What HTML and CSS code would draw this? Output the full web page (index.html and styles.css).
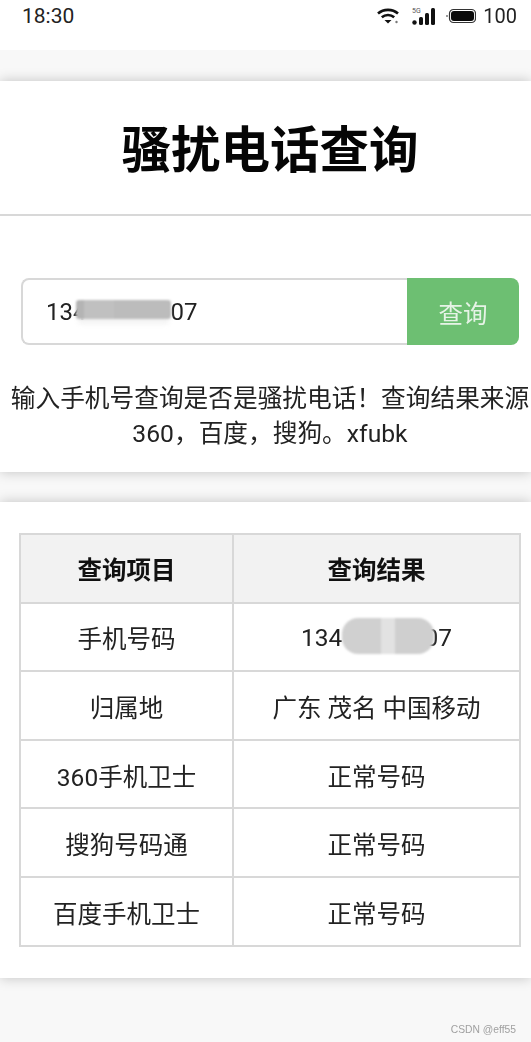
FILE: index.html
```html
<!DOCTYPE html>
<html lang="zh-CN">
<head>
<meta charset="utf-8">
<title>骚扰电话查询</title>
<link rel="stylesheet" href="styles.css">
</head>
<body>
<div class="page">
  <header class="status">
    <span class="time">18:30</span>
    <div class="status-right">
      <svg class="wifi" width="22" height="16" viewBox="0 0 22 16"><path d="M1 5.500C6.500.6 15.500.6 21 5.500" fill="none" stroke="#111" stroke-width="2.600"/><path d="M4.800 9.300C8.300 6.300 13.700 6.300 17.200 9.300" fill="none" stroke="#111" stroke-width="2.600"/><path d="M7.500 12L14.500 12L11 15.500Z" fill="#111"/><circle cx="19.500" cy="14" r="1.200" fill="#777"/></svg>
      <svg class="signal" width="23" height="20" viewBox="0 0 23 20"><text x="0" y="7" class="five-g">5G</text><circle cx="2.500" cy="16.500" r="2.200" fill="#111"/><rect x="7" y="11" width="4" height="8" rx="1.500" fill="#111"/><rect x="13" y="7" width="4" height="12" rx="1.500" fill="#111"/><rect x="19" y="2" width="4" height="17" rx="1.500" fill="#111"/></svg>
      <svg class="battery" width="30" height="16" viewBox="0 0 30 16"><circle cx="1" cy="8" r="1" fill="#777"/><rect x="3.500" y="1.500" width="26" height="13" rx="4" fill="none" stroke="#333" stroke-width="1.200"/><rect x="5" y="3" width="23" height="10" rx="3" fill="#0a0a0a"/></svg>
      <span class="level">100</span>
    </div>
  </header>

  <section class="card search-card">
    <h1 class="title">骚扰电话查询</h1>
    <div class="search-body">
      <div class="search-row">
        <div class="input">134<span class="gap-a"></span>07<span class="mask mask-input"></span></div>
        <div class="btn">查询</div>
      </div>
      <p class="hint">输入手机号查询是否是骚扰电话！查询结果来源360，百度，搜狗。xfubk</p>
    </div>
  </section>

  <section class="card table-card">
    <table class="result">
      <tr><th class="col-a">查询项目</th><th>查询结果</th></tr>
      <tr><td>手机号码</td><td class="phone">134<span class="gap-b"></span>07<span class="mask mask-cell"></span></td></tr>
      <tr><td>归属地</td><td>广东 茂名 中国移动</td></tr>
      <tr><td>360手机卫士</td><td>正常号码</td></tr>
      <tr><td>搜狗号码通</td><td>正常号码</td></tr>
      <tr><td>百度手机卫士</td><td>正常号码</td></tr>
    </table>
  </section>

  <footer class="mark">CSDN @eff55</footer>
</div>
</body>
</html>
```

FILE: styles.css
```css
* { box-sizing: border-box; }
html, body { margin: 0; padding: 0; }
body {
  width: 531px;
  height: 1042px;
  overflow: hidden;
  background: #f8f8f8;
  color: #1c1c1c;
  font-family: "Roboto", "Noto Sans CJK SC", sans-serif;
}
.page { position: relative; height: 1042px; filter: blur(0.35px); }

.status {
  height: 50px;
  background: #fff;
  display: flex;
  align-items: flex-start;
  justify-content: space-between;
  padding: 4px 14px 0 22px;
  font-size: 20px;
  line-height: 24px;
  color: #222;
}
.time { font-size: 21px; }
.status-right { display: flex; align-items: center; height: 24px; }
.wifi { margin-right: 13px; }
.signal { margin-right: 11px; }
.battery { margin-right: 7px; }
.five-g { font: 7px "Roboto", sans-serif; fill: #555; }

.card {
  background: #fff;
  box-shadow: 0 0 12px rgba(0, 0, 0, 0.22);
}
.search-card { margin-top: 31px; height: 391px; }
.table-card { margin-top: 30px; height: 476px; padding: 31px 10px 0 19px; }

.title {
  margin: 0;
  height: 135px;
  padding-left: 9px;
  border-bottom: 2px solid #d8d8d8;
  text-align: center;
  font-size: 49.500px;
  line-height: 141px;
  font-weight: 700;
  color: #050505;
}
.search-body { padding: 62px 12px 0 21px; }
.search-row { display: flex; height: 67px; }
.input {
  position: relative;
  width: 386px;
  border: 2px solid #d8d8d8;
  border-right: 0;
  border-radius: 8px 0 0 8px;
  padding-left: 23px;
  font-size: 24px;
  line-height: 64px;
  color: #222;
  display: flex;
}
.gap-a { width: 84px; }
.btn {
  width: 112px;
  background: #6dbf72;
  border-radius: 0 8px 8px 0;
  color: #e6f3e6;
  text-align: center;
  font-size: 24.500px;
  line-height: 74px;
  overflow: hidden;
}
.mask { position: absolute; display: block; }
.mask-input {
  left: 53px;
  top: 20px;
  width: 95px;
  height: 19px;
  background: linear-gradient(to right, #b4b4b4 0 8%, #c0c0c0 8% 40%, #bcbcbc 40% 100%);
  border-radius: 3px;
  box-shadow: 0 7px 5px -2px #f3f3f3;
  filter: blur(0.8px);
}
.hint {
  margin: 36px -12px 0 -21px;
  padding: 0 0 0 9px;
  font-size: 24.700px;
  line-height: 35px;
  text-align: center;
  color: #222;
}

.result {
  width: 502px;
  height: 412px;
  border-collapse: collapse;
  table-layout: fixed;
  font-size: 24.500px;
  text-align: center;
  color: #222;
}
.result th, .result td {
  border: 2px solid #d8d8d8;
  padding: 0;
  height: 68.600px;
}
.result td { padding-top: 2px; }
.result th { background: #f2f2f2; font-weight: 700; color: #111; }
.col-a { width: 213px; }
.phone { position: relative; }
.gap-b { display: inline-block; width: 82px; }
.mask-cell {
  left: 108px;
  top: 14px;
  width: 92px;
  height: 36px;
  background: linear-gradient(to right, #d0d0d0 0 42%, #e2e2e2 42% 58%, #cfcfcf 58% 100%);
  border-radius: 16px;
  filter: blur(0.8px);
}

.mark {
  position: absolute;
  right: 15px;
  bottom: 5px;
  font-size: 10.300px;
  line-height: 14px;
  color: #a0a0a0;
  font-family: "Liberation Sans", sans-serif;
}
```
